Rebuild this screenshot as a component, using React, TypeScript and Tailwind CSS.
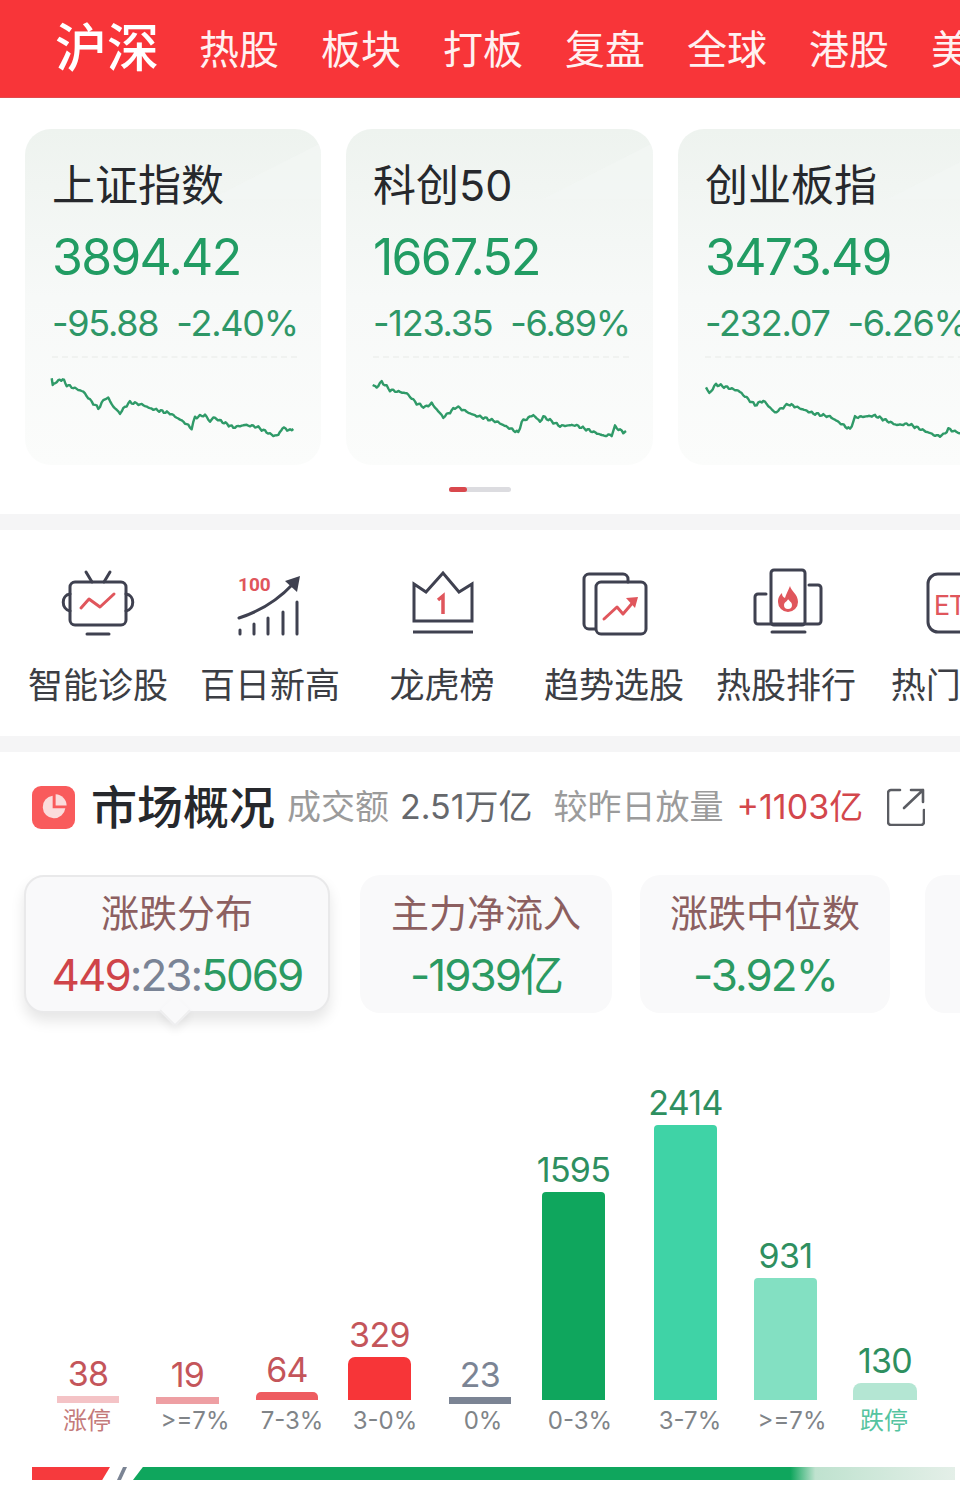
const red = "#e0565c";
const ink = "#3f4150";

type P = [number, number];

function jag(keys: P[]) {
  const out: string[] = [];
  let n = 0;
  keys.forEach((k, i) => {
    if (i === keys.length - 1) {
      out.push(`${k[0]},${k[1]}`);
      return;
    }
    const [x1, y1] = k;
    const [x2, y2] = keys[i + 1];
    const steps = Math.max(1, Math.round((x2 - x1) / 1.6));
    for (let s = 0; s < steps; s++) {
      const t = s / steps;
      const noise = (Math.sin(n * 1.9) + Math.sin(n * 4.7)) * 0.7;
      out.push(`${(x1 + (x2 - x1) * t).toFixed(1)},${(y1 + (y2 - y1) * t + noise).toFixed(1)}`);
      n++;
    }
  });
  return out.join(" ");
}

const z1 = (pts: number[][]): P[] => pts.map(([x, y]) => [x / 3, y / 3 + 280]);
const z3 = (pts: number[][]): P[] => pts.map(([x, y]) => [x / 3 + 480, y / 3 + 280]);

const line1 = z1([[155,295],[158,315],[170,305],[188,297],[200,315],[225,325],[250,335],[270,360],[295,385],[315,355],[325,355],[340,380],[360,400],[375,380],[390,367],[430,375],[450,385],[510,400],[550,425],[575,445],[585,412],[615,405],[630,425],[640,412],[700,442],[735,435],[770,440],[820,467],[835,465],[848,443],[870,452],[880,447]]);
const line2 = z1([[1118,315],[1130,322],[1145,305],[1170,330],[1220,340],[1250,370],[1275,382],[1295,370],[1330,412],[1370,380],[1420,405],[1440,410],[1490,425],[1555,458],[1565,425],[1600,405],[1620,425],[1630,410],[1680,438],[1725,435],[1810,467],[1835,465],[1845,440],[1870,457],[1878,453]]);
const line3 = z3([[678,322],[688,340],[708,313],[775,332],[825,375],[850,362],[885,398],[905,385],[925,372],[1000,400],[1050,410],[1110,448],[1125,412],[1185,407],[1250,435],[1285,432],[1370,468],[1390,465],[1405,447],[1440,460],[1500,455]]);

function IndexCard(props: { w: string; pl: string; name: string; price: string; a: string; b: string; box: string; pts: P[]; svgW: string }) {
  return (
    <div className={`relative shrink-0 overflow-hidden h-[336px] rounded-[26px] bg-gradient-to-b from-[#eef3ef] via-[#f7f9f8] to-[#fbfcfb] ${props.w} ${props.pl}`}>
      <div className="absolute right-0 top-[14px] w-[110px] h-[56px] bg-[#f4f7f5] opacity-60 [clip-path:polygon(100%_0,100%_100%,0_100%)]" />
      <div className="relative mt-[34px] text-[43px] leading-[44px] text-[#26282c] whitespace-nowrap">{props.name}</div>
      <div className="relative mt-[25px] text-[50px] leading-[50px] tracking-[-0.035em] text-[#219c63] whitespace-nowrap">{props.price}</div>
      <div className="relative mt-[22px] flex gap-[18px] text-[36px] leading-[38px] tracking-[-0.035em] text-[#2e9767] whitespace-nowrap">
        <span>{props.a}</span>
        <span>{props.b}</span>
      </div>
      <div className="relative mt-[14px] mr-[24px] border-t-2 border-dashed border-[#f0f2f0]" />
      <svg viewBox={props.box} className={`relative mt-[14px] h-[72px] overflow-visible ${props.svgW}`}>
        <polyline points={jag(props.pts)} fill="none" stroke="#2f9a68" strokeWidth="2.4" strokeLinejoin="round" />
      </svg>
    </div>
  );
}

function IconTv() {
  return (
    <svg viewBox="59 568 80 72" className="w-[80px] h-[72px]" fill="none" strokeLinecap="round" strokeLinejoin="round">
      <g stroke={ink} strokeWidth="3">
        <rect x="71" y="582" width="56" height="43" rx="5" />
        <path d="M87 572l6 10M111 572l-6 10" />
        <path d="M71 594c-9 1-9 15 0 17M127 594c9 1 9 15 0 17" />
        <path d="M88 634h22" />
      </g>
      <path d="M82 608l8-9 11 8 14-13" stroke={red} strokeWidth="3" />
    </svg>
  );
}

function IconHundred() {
  return (
    <svg viewBox="230 568 80 72" className="w-[80px] h-[72px]" fill="none" strokeLinecap="round">
      <text x="238" y="591" fill={red} fontSize="19" fontWeight="700" stroke="none" style={{ fontFamily: "Roboto, sans-serif" }}>100</text>
      <path d="M239 618c22-7 39-18 54-34" stroke={ink} strokeWidth="3" />
      <path d="M300 576l-3 16-12-11z" fill={ink} />
      <path d="M240 630v4M254 624v10M268 618v16M283 612v22M297 602v32" stroke={ink} strokeWidth="3" />
    </svg>
  );
}

function IconCrown() {
  return (
    <svg viewBox="402 568 80 72" className="w-[80px] h-[72px]" fill="none" strokeLinejoin="miter">
      <path d="M414 584l12 8 17-19 16 19 13-8v37h-58z" stroke={ink} strokeWidth="3" />
      <path d="M413 632h60" stroke={ink} strokeWidth="3" />
      <path d="M438 600l5-4v18" stroke={red} strokeWidth="3.5" />
    </svg>
  );
}

function IconTrend() {
  return (
    <svg viewBox="574 568 80 72" className="w-[80px] h-[72px]" fill="none" strokeLinecap="round" strokeLinejoin="round">
      <path d="M595 629h-6a5 5 0 0 1-5-5v-45a5 5 0 0 1 5-5h34a5 5 0 0 1 5 5v3" stroke={ink} strokeWidth="3" />
      <rect x="596" y="582" width="50" height="52" rx="5" stroke={ink} strokeWidth="3" />
      <path d="M604 619l13-12 6 7 12-14" stroke={red} strokeWidth="3" />
      <path d="M638 597l-12 1 9 10z" fill={red} />
    </svg>
  );
}

function IconHot() {
  return (
    <svg viewBox="746 568 80 72" className="w-[80px] h-[72px]" fill="none" strokeLinecap="round" strokeLinejoin="round">
      <rect x="771" y="570" width="34" height="55" rx="3" stroke={ink} strokeWidth="3" />
      <path d="M766 594h-8a3 3 0 0 0-3 3v24a3 3 0 0 0 3 3h60a3 3 0 0 0 3-3v-33a3 3 0 0 0-3-3h-9" stroke={ink} strokeWidth="3" />
      <path d="M772 632h33" stroke={ink} strokeWidth="3" />
      <path fillRule="evenodd" d="M790 586c1 5 8 8 8 16a10 10 0 0 1-20 0c0-5 2-7 4-9 0 3 1 4 3 5 1-4 3-7 5-12zm-2 13c0 2-4 3-4 6a4 4 0 0 0 8 0c0-3-3-4-4-6z" fill={red} />
    </svg>
  );
}

function IconEtf() {
  return (
    <svg viewBox="918 568 80 72" className="w-[80px] h-[72px]" fill="none">
      <rect x="928" y="574" width="64" height="58" rx="10" stroke={ink} strokeWidth="3" />
      <text x="934" y="615" fill={red} fontSize="27" stroke="none" style={{ fontFamily: "Roboto, sans-serif" }}>ETF</text>
    </svg>
  );
}

const tools = [
  { icon: <IconTv />, label: "智能诊股" },
  { icon: <IconHundred />, label: "百日新高" },
  { icon: <IconCrown />, label: "龙虎榜" },
  { icon: <IconTrend />, label: "趋势选股" },
  { icon: <IconHot />, label: "热股排行" },
  { icon: <IconEtf />, label: "热门ETF" },
];

const bars = [
  { v: "38", col: "w-[62px]", text: "text-[#c4555a]", bar: "h-[7px] bg-[#f4c3c6] mb-[-3px]" },
  { v: "19", col: "w-[63px] ml-[37px]", text: "text-[#c4555a]", bar: "h-[7px] bg-[#ee9fa3] mb-[-4px]" },
  { v: "64", col: "w-[62px] ml-[37px]", text: "text-[#c4555a]", bar: "h-[8px] bg-[#ee5c60] rounded-t-[5px]" },
  { v: "329", col: "w-[63px] ml-[30px]", text: "text-[#c4555a]", bar: "h-[43px] bg-[#f73538] rounded-t-[7px]" },
  { v: "23", col: "w-[62px] ml-[38px]", text: "text-[#7b8494]", bar: "h-[7px] bg-[#7b8494] mb-[-4px]" },
  { v: "1595", col: "w-[63px] ml-[31px]", text: "text-[#2e8f60]", bar: "h-[208px] bg-[#0fa65d] rounded-t-[4px]" },
  { v: "2414", col: "w-[63px] ml-[49px]", text: "text-[#2e8f60]", bar: "h-[275px] bg-[#3fd3a6] rounded-t-[4px]" },
  { v: "931", col: "w-[63px] ml-[37px]", text: "text-[#2e8f60]", bar: "h-[122px] bg-[#83e0c2] rounded-t-[4px]" },
  { v: "130", col: "w-[64px] ml-[36px]", text: "text-[#2e8f60]", bar: "h-[17px] bg-[#b4e6d3] rounded-t-[8px]" },
];

const caps = [
  { t: "涨停", c: "w-[100px] ml-[37px] text-[#c47a7a]" },
  { t: ">=7%", c: "w-[96px] ml-[10px] text-[#808488]" },
  { t: "7-3%", c: "w-[98px] text-[#808488]" },
  { t: "3-0%", c: "w-[88px] text-[#808488]" },
  { t: "0%", c: "w-[108px] text-[#808488]" },
  { t: "0-3%", c: "w-[86px] text-[#808488]" },
  { t: "3-7%", c: "w-[134px] text-[#808488]" },
  { t: ">=7%", c: "w-[70px] text-[#808488]" },
  { t: "跌停", c: "w-[114px] text-[#55c4a0]" },
];

function Tab(props: { cls: string; titleCls: string; title: string; children: React.ReactNode }) {
  return (
    <div className={`shrink-0 h-[138px] rounded-[20px] bg-[#f9f9fa] flex flex-col items-center whitespace-nowrap ${props.cls}`}>
      <div className={`text-[38px] leading-[42px] text-[#8c5f60] ${props.titleCls}`}>{props.title}</div>
      <div className="mt-[16px] text-[44px] leading-[50px] tracking-[-0.045em]">{props.children}</div>
    </div>
  );
}

export default function App() {
  return (
    <div className="w-[960px] h-[1496px] overflow-hidden bg-white [font-family:Inter,'Noto_Sans_CJK_SC',sans-serif]">
      <div className="h-[98px] bg-[#f83539] border-b border-[#e24a4d] flex items-center pl-[55px] overflow-hidden text-white whitespace-nowrap">
        <div className="text-[52px] font-medium leading-[60px] mr-[40px] shrink-0">沪深</div>
        <div className="mt-[3px] flex gap-[42px] text-[40px] leading-[50px] shrink-0 text-[#fff1f1]">
          <span>热股</span>
          <span>板块</span>
          <span>打板</span>
          <span>复盘</span>
          <span>全球</span>
          <span>港股</span>
          <span>美股</span>
        </div>
      </div>

      <div className="h-[416px] pt-[31px]">
        <div className="flex gap-[25px] pl-[25px] overflow-hidden">
          <IndexCard w="w-[296px]" pl="pl-[27px]" name="上证指数" price="3894.42" a="-95.88" b="-2.40%" box="52 372 250 72" pts={line1} svgW="w-[250px]" />
          <IndexCard w="w-[307px]" pl="pl-[27px]" name="科创50" price="1667.52" a="-123.35" b="-6.89%" box="373 372 260 72" pts={line2} svgW="w-[260px]" />
          <IndexCard w="w-[320px]" pl="pl-[27px]" name="创业板指" price="3473.49" a="-232.07" b="-6.26%" box="705 372 280 72" pts={line3} svgW="w-[280px]" />
        </div>
        <div className="mt-[22px] ml-[449px] w-[62px] h-[5px] rounded-full bg-[#dcdce0]">
          <div className="w-[18px] h-[5px] rounded-full bg-[#d9484d]" />
        </div>
      </div>

      <div className="h-[16px] bg-[#f5f5f6]" />

      <div className="h-[206px] pt-[38px] pl-[12px] flex overflow-hidden">
        {tools.map((t) => (
          <div key={t.label} className="w-[172px] shrink-0 flex flex-col items-center">
            {t.icon}
            <div className="mt-[26px] text-[35px] leading-[38px] text-[#3c3e44] whitespace-nowrap">{t.label}</div>
          </div>
        ))}
      </div>

      <div className="h-[16px] bg-[#f5f5f6]" />

      <div className="pt-[30px] pl-[32px] flex items-center whitespace-nowrap">
        <div className="w-[43px] h-[43px] rounded-[9px] bg-[#f95b5c] flex items-center justify-center">
          <svg viewBox="0 0 24 24" className="w-[32px] h-[32px]">
            <path d="M11 3.5a8.5 8.5 0 1 0 9.5 9.5H11z" fill="#fbdcdc" />
            <path d="M13.2 2.5a8.5 8.5 0 0 1 8.3 8.3h-8.3z" fill="#fbdcdc" />
          </svg>
        </div>
        <div className="ml-[16px] text-[46px] leading-[50px] font-medium text-[#26282c]">市场概况</div>
        <div className="ml-[12px] text-[34px] leading-[44px] text-[#9b9b9b]">成交额</div>
        <div className="ml-[11px] text-[34px] leading-[44px] text-[#66686c]">2.51万亿</div>
        <div className="ml-[21px] text-[34px] leading-[44px] text-[#9b9b9b]">较昨日放量</div>
        <div className="ml-[13px] text-[34px] leading-[44px] text-[#d3474c]">+1103亿</div>
        <svg viewBox="0 0 38 38" className="ml-[24px] w-[38px] h-[38px]" fill="none" stroke="#5a5c62" strokeWidth="2.6" strokeLinecap="round" strokeLinejoin="round">
          <path d="M13 2H4a3 3 0 0 0-3 3v29a3 3 0 0 0 3 3h30a3 3 0 0 0 3-3V22" />
          <path d="M17 20L36 2M24 2h12v12" />
        </svg>
      </div>

      <div className="mt-[43px] flex items-start overflow-hidden pb-[24px] pl-[24px] -mb-[24px]">
        <div className="relative shrink-0">
          <Tab cls="w-[306px] border-2 border-[#e9e9ea] shadow-[0_8px_14px_rgba(0,0,0,0.10)]" titleCls="mt-[15px]" title="涨跌分布">
            <span className="text-[#cf4449]">449</span>
            <span className="text-[#7a8496]">:23:</span>
            <span className="text-[#2b9a62]">5069</span>
          </Tab>
          <div className="absolute left-[140px] top-[125px] w-[22px] h-[22px] rotate-45 bg-[#f9f9fa] border-r-2 border-b-2 border-[#eeeeef] shadow-[4px_4px_8px_rgba(0,0,0,0.06)]" />
        </div>
        <Tab cls="w-[252px] ml-[30px]" titleCls="mt-[17px]" title="主力净流入">
          <span className="text-[#2b9a62]">-1939亿</span>
        </Tab>
        <Tab cls="w-[250px] ml-[28px]" titleCls="mt-[17px]" title="涨跌中位数">
          <span className="text-[#2b9a62]">-3.92%</span>
        </Tab>
        <Tab cls="w-[250px] ml-[35px]" titleCls="mt-[17px]" title="涨停表现">
          <span className="text-[#2b9a62]">-4.18%</span>
        </Tab>
      </div>

      <div className="h-[387px] flex items-end pl-[57px]">
        {bars.map((b) => (
          <div key={b.v} className={`shrink-0 flex flex-col items-stretch ${b.col}`}>
            <div className={`flex justify-center whitespace-nowrap text-[34px] leading-[36px] mb-[4px] tracking-[-0.02em] ${b.text}`}>{b.v}</div>
            <div className={b.bar} />
          </div>
        ))}
      </div>

      <div className="mt-[4px] flex text-[24px] leading-[34px] whitespace-nowrap">
        {caps.map((c, i) => (
          <div key={i} className={`shrink-0 text-center ${c.c}`}>{c.t}</div>
        ))}
      </div>

      <div className="mt-[29px] ml-[32px] flex h-[13px]">
        <div className="w-[78px] bg-[#f63a3d] [clip-path:polygon(0_0,100%_0,90%_100%,0_100%)]" />
        <div className="w-[10px] ml-[7px] bg-[#7b8494] [clip-path:polygon(60%_0,100%_0,40%_100%,0_100%)]" />
        <div className="w-[822px] ml-[6px] bg-[linear-gradient(90deg,#0fa65d_0%,#0fa65d_80%,#bfe2cf_83%,#e4efe8_100%)] [clip-path:polygon(1.2%_0,100%_0,100%_100%,0_100%)]" />
      </div>
    </div>
  );
}
